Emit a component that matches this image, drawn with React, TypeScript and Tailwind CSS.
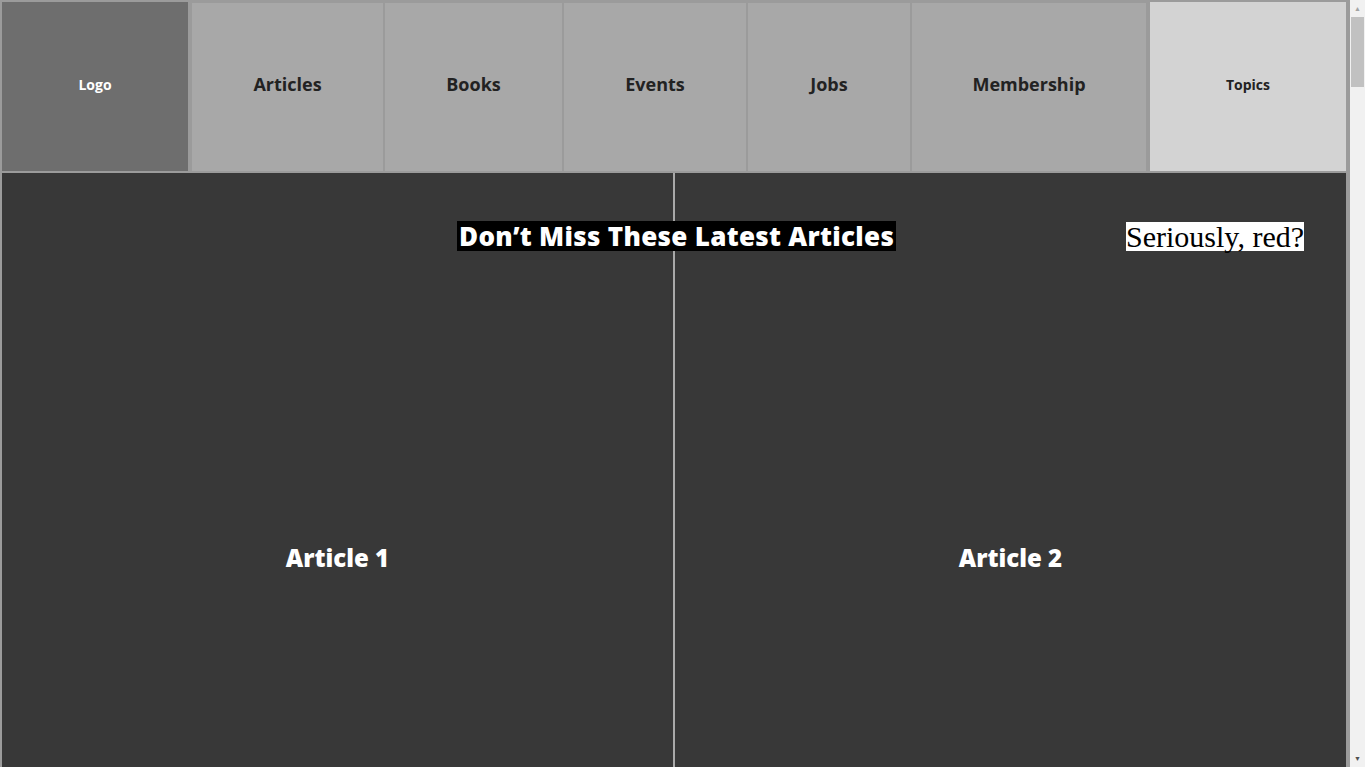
const navItems = [
  { label: "Articles", w: "w-[191px]" },
  { label: "Books", w: "w-[177px]" },
  { label: "Events", w: "w-[182px]" },
  { label: "Jobs", w: "w-[162px]" },
  { label: "Membership", w: "w-[234px]" },
];

function App() {
  return (
    <div className="min-h-screen bg-[#f1f1f1] font-['Open_Sans',sans-serif]">
      <div className="w-[1350px] bg-[#9b9b9b]">
        {/* nav */}
        <nav className="flex h-[173px] p-[2px]">
          <div className="w-[186px] bg-[#6e6e6e] flex items-center justify-center pb-[4px] text-white text-sm font-bold">
            Logo
          </div>
          <div className="flex gap-[2px] pl-[4px] pr-[4px] pt-[1px]">
            {navItems.map((item) => (
              <div
                key={item.label}
                className={`${item.w} bg-[#a8a8a8] flex items-center justify-center pb-[6px] text-[#222] text-lg font-bold`}
              >
                {item.label}
              </div>
            ))}
          </div>
          <div className="w-[196px] bg-[#d3d3d3] flex items-center justify-center pb-[4px] text-[#222] text-sm font-bold">
            Topics
          </div>
        </nav>
        {/* articles */}
        <main className="relative grid grid-cols-2 gap-[2px] bg-[#a9a9a9] ml-[2px] mr-[4px] h-[770px]">
          <div className="bg-[#383838] flex items-center justify-center text-white text-2xl font-extrabold">
            Article 1
          </div>
          <div className="bg-[#383838] flex items-center justify-center text-white text-2xl font-extrabold">
            Article 2
          </div>
          <h2 className="absolute top-[48px] left-[455px] h-[30px] bg-black text-white text-[26px] leading-[30px] font-extrabold px-[2px] tracking-[0.3px]">
            Don’t Miss These Latest Articles
          </h2>
          <p className="absolute top-[49px] left-[1124px] bg-white text-black text-[30px] leading-[29px] font-['Liberation_Serif',serif]">
            Seriously, red?
          </p>
        </main>
      </div>
      {/* scrollbar */}
      <div className="fixed top-0 right-0 h-screen w-[15px] bg-[#f1f1f1] flex flex-col items-center">
        <div className="h-[17px] flex items-center justify-center text-[7px] text-[#a3a3a3] leading-none">▲</div>
        <div className="w-[13px] h-[70px] bg-[#c1c1c1]" />
        <div className="flex-1" />
        <div className="h-[17px] flex items-center justify-center text-[7px] text-[#505050] leading-none">▼</div>
      </div>
    </div>
  );
}

export default App;
